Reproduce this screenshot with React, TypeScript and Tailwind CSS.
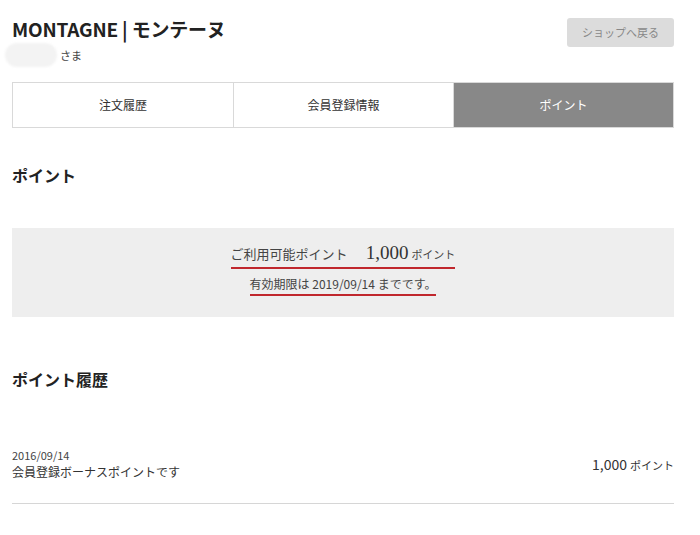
const JP = "font-['Noto_Sans_CJK_JP','Noto_Sans',sans-serif]";

const tabs = [
  { label: "注文履歴", active: false },
  { label: "会員登録情報", active: false },
  { label: "ポイント", active: true },
];

export default function App() {
  return (
    <div className={`${JP} min-h-[535px] w-[700px] bg-white pl-3 pr-[26px] text-[#333]`}>
      <header className="flex items-start justify-between pt-[16px]">
        <div>
          <h1 className="text-[19px] font-semibold leading-[25px] tracking-[-0.2px] text-[#222]">
            MONTAGNE | モンテーヌ
          </h1>
          <div className="mt-[2px] flex items-center">
            <span className="-ml-[7px] h-[24px] w-[52px] rounded-full bg-[#f3f3f3] blur-[1px]" />
            <span className="ml-[3px] text-[11px] text-[#444]">さま</span>
          </div>
        </div>
        <button className="mt-[2px] h-[29px] w-[107px] rounded-[3px] bg-[#dcdcdc] text-[11px] text-[#888]">
          ショップへ戻る
        </button>
      </header>

      <nav className="mt-[15px] grid h-[46px] grid-cols-3 border border-[#d9d9d9]">
        {tabs.map((t, i) => (
          <div
            key={t.label}
            className={`flex items-center justify-center text-[12px] ${
              i > 0 ? "border-l border-[#d9d9d9]" : ""
            } ${t.active ? "bg-[#888888] text-white" : "bg-white text-[#333]"}`}
          >
            {t.label}
          </div>
        ))}
      </nav>

      <h2 className="mt-[36px] text-[16px] font-bold leading-[22px] text-[#222]">ポイント</h2>

      <section className="mt-[42px] flex h-[89px] flex-col items-center bg-[#eeeeee] pt-[13px]">
        <p className="flex items-baseline border-b-2 border-[#c0272d] pb-[1px] leading-[24px]">
          <span className="text-[13px] text-[#444]">ご利用可能ポイント</span>
          <span className="ml-[18px] font-['Liberation_Serif',serif] text-[19px] text-[#333]">1,000</span>
          <span className="ml-[3px] text-[11px] text-[#444]">ポイント</span>
        </p>
        <p className="mt-[6px] border-b-2 border-[#c0272d] pb-[1px] text-[12px] leading-[18px] text-[#444]">
          有効期限は 2019/09/14 までです。
        </p>
      </section>

      <h2 className="mt-[51px] text-[16px] font-bold leading-[22px] text-[#222]">ポイント履歴</h2>

      <div className="mt-[58px] flex items-center justify-between border-b border-[#d6d6d6] pb-[22px]">
        <div>
          <div className="text-[11px] leading-[14px] text-[#444]">2016/09/14</div>
          <div className="mt-[1px] text-[12px] leading-[18px] text-[#333]">会員登録ボーナスポイントです</div>
        </div>
        <div className="flex items-baseline text-[#333]">
          <span className="text-[14px]">1,000</span>
          <span className="ml-[3px] text-[11px]">ポイント</span>
        </div>
      </div>
    </div>
  );
}
